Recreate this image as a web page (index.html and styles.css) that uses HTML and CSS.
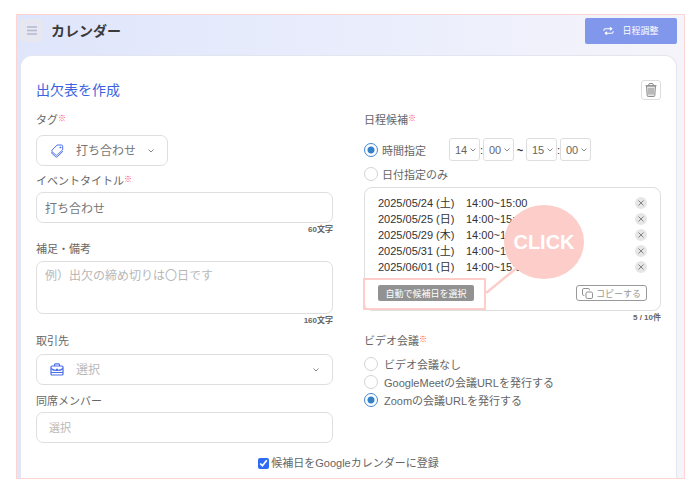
FILE: index.html
```html
<!DOCTYPE html>
<html lang="ja">
<head>
    <meta charset="UTF-8">
    <meta name="viewport" content="width=device-width, initial-scale=1.0">
    <title>カレンダー</title>
    <link rel="stylesheet" href="styles.css">
</head>
<body>
    <div class="app">
        <header class="topbar">
            <button type="button" class="menu-btn" aria-label="メニュー">
                <svg width="10" height="9" viewBox="0 0 10 9" stroke="#b4b9d0" stroke-width="1.4"><path d="M0 1h10M0 4.5h10M0 8h10"/></svg>
            </button>
            <h1>カレンダー</h1>
            <button type="button" class="schedule-btn">
                <svg width="11" height="8" viewBox="0 0 11 8" fill="none" stroke="#fff" stroke-width="1.1" stroke-linecap="round" stroke-linejoin="round"><path d="M.8 3.500q.2-1.700 1.700-1.700H8.500M7.300.6 8.800 1.800 7.300 3M10.200 4.500q-.2 1.700-1.700 1.700H2.500M3.700 5 2.200 6.200 3.700 7.400"/></svg>
                日程調整
            </button>
        </header>

        <form class="card">
            <div class="card-head">
                <h2>出欠表を作成</h2>
                <button type="button" class="trash-btn" aria-label="削除">
                    <svg width="12" height="14" viewBox="0 0 12 14" fill="none" stroke="#8c8c8c" stroke-width="1" stroke-linejoin="round"><path d="M1.500 3l.7 9.500q0 1 1 1h5.600q1 0 1-1L10.500 3z" fill="#e4e4e4"/><path d="M.5 2.700h11M3.500 2.500Q3.500.5 5 .5h2q1.500 0 1.500 2M4 5v6.500M6 5v6.500M8 5v6.500"/></svg>
                </button>
            </div>

            <div class="columns">
                <div class="col">
                    <label class="label" for="tag">タグ<sup>※</sup></label>
                    <div class="box select-box tag-box">
                        <svg width="14" height="14" viewBox="0 0 14 14" fill="none" stroke="#4a6fe8" stroke-width="1" stroke-linejoin="round" stroke-linecap="round"><path d="M7.500 1h4q1.200 0 1.200 1.200v3.600L7.200 11q-.7.600-1.400 0L2 7.700q-.700-.7-.1-1.400zM1.300 8.700l4.500 4.200q.7.500 1.400 0L12.700 7.500"/><circle cx="10.300" cy="3.400" r=".5"/></svg>
                        <select id="tag"><option>打ち合わせ</option></select>
                    </div>

                    <label class="label title-label" for="title">イベントタイトル<sup>※</sup></label>
                    <input class="box" id="title" type="text" value="打ち合わせ">
                    <p class="hint">60文字</p>

                    <label class="label note-label" for="note">補足・備考</label>
                    <textarea class="box" id="note" placeholder="例）出欠の締め切りは〇日です"></textarea>
                    <p class="hint">160文字</p>

                    <label class="label client-label" for="client">取引先</label>
                    <div class="box select-box client-box">
                        <svg width="14" height="13" viewBox="0 0 14 13" fill="none" stroke="#4a6fe8" stroke-width="1.200" stroke-linejoin="round"><path d="M4.500 3V1.700q0-.900.900-.900h3.200q.900 0 .900.900V3"/><rect x="1" y="3" width="12" height="9" rx="1"/><path d="M1 5.500Q3 7.500 7 7.500T13 5.500M1 9.500h12M6 6.300h2"/></svg>
                        <select id="client"><option>選択</option></select>
                    </div>

                    <label class="label member-label" for="member">同席メンバー</label>
                    <input class="box member" id="member" type="text" placeholder="選択">
                </div>

                <div class="col">
                    <p class="label">日程候補<sup>※</sup></p>
                    <div class="time-row">
                        <label class="radio"><input type="radio" name="mode" checked>時間指定</label>
                        <div class="times">
                            <select aria-label="開始時"><option>14</option></select>
                            <span>:</span>
                            <select aria-label="開始分"><option>00</option></select>
                            <span class="tilde">~</span>
                            <select aria-label="終了時"><option>15</option></select>
                            <span>:</span>
                            <select aria-label="終了分"><option>00</option></select>
                        </div>
                    </div>
                    <label class="radio date-only"><input type="radio" name="mode">日付指定のみ</label>

                    <div class="candidates">
                        <ul>
                            <li><span class="date">2025/05/24 (土)</span><span>14:00~15:00</span><button type="button" class="remove" aria-label="削除"><svg width="6" height="6" viewBox="0 0 6 6" stroke="#858585"><path d="M.5.5l5 5M5.500.5l-5 5"/></svg></button></li>
                            <li><span class="date">2025/05/25 (日)</span><span>14:00~15:00</span><button type="button" class="remove" aria-label="削除"><svg width="6" height="6" viewBox="0 0 6 6" stroke="#858585"><path d="M.5.5l5 5M5.500.5l-5 5"/></svg></button></li>
                            <li><span class="date">2025/05/29 (木)</span><span>14:00~15:00</span><button type="button" class="remove" aria-label="削除"><svg width="6" height="6" viewBox="0 0 6 6" stroke="#858585"><path d="M.5.5l5 5M5.500.5l-5 5"/></svg></button></li>
                            <li><span class="date">2025/05/31 (土)</span><span>14:00~15:00</span><button type="button" class="remove" aria-label="削除"><svg width="6" height="6" viewBox="0 0 6 6" stroke="#858585"><path d="M.5.5l5 5M5.500.5l-5 5"/></svg></button></li>
                            <li><span class="date">2025/06/01 (日)</span><span>14:00~15:00</span><button type="button" class="remove" aria-label="削除"><svg width="6" height="6" viewBox="0 0 6 6" stroke="#858585"><path d="M.5.5l5 5M5.500.5l-5 5"/></svg></button></li>
                        </ul>
                        <div class="actions">
                            <button type="button" class="auto-btn">自動で候補日を選択</button>
                            <button type="button" class="copy-btn">
                                <svg width="11" height="11" viewBox="0 0 11 11" fill="none" stroke="#8f8f8f"><rect x="4" y="4" width="6.500" height="6.500" rx="1.300"/><path d="M2.300 7.500H1.800Q.5 7.500.5 6.200V1.800Q.5.5 1.800.5h4.400q1.300 0 1.300 1.300v.5"/></svg>
                                コピーする
                            </button>
                        </div>
                        <!-- click guide laid over the list -->
                        <div class="guide-frame"></div>
                        <svg class="guide-line" width="40" height="34" viewBox="0 0 40 34" stroke="#fccdc9" stroke-width="2.5"><path d="M0 31 38 0"/></svg>
                        <div class="guide-click">CLICK</div>
                    </div>
                    <p class="hint">5 / 10件</p>

                    <p class="label video-label">ビデオ会議<sup>※</sup></p>
                    <div class="videos">
                        <label class="radio"><input type="radio" name="video">ビデオ会議なし</label>
                        <label class="radio"><input type="radio" name="video">GoogleMeetの会議URLを発行する</label>
                        <label class="radio"><input type="radio" name="video" checked>Zoomの会議URLを発行する</label>
                    </div>
                </div>
            </div>

            <label class="register"><input type="checkbox" checked>候補日をGoogleカレンダーに登録</label>
        </form>
    </div>
</body>
</html>
```
FILE: styles.css
```css
* {
    box-sizing: border-box;
}
body {
    margin: 0;
    padding: 14px 15px 21px 16px;
    height: 100vh;
    display: flex;
    background: #fff;
    color: #666;
    font-family: "Liberation Sans", "Noto Sans CJK JP", sans-serif;
    font-size: 11px;
}
h1, h2, p, ul {
    margin: 0;
    padding: 0;
}
button, input, select, textarea {
    font-family: inherit;
    margin: 0;
}
button {
    display: flex;
    align-items: center;
    justify-content: center;
    padding: 0;
    border: none;
    cursor: pointer;
}
svg {
    flex: none;
}
.app {
    flex: 1;
    display: flex;
    flex-direction: column;
    overflow: hidden;
    border: 1px solid #fcd5d3;
    background: linear-gradient(90deg, #dfe5fb, #e9edfc 50%, #f5f4fa);
}

/* header */
.topbar {
    display: flex;
    align-items: center;
    height: 40px;
    padding: 0 7px 9px 3px;
}
.menu-btn {
    width: 23px;
    height: 23px;
    border-radius: 4px;
    background: #e6e7f0;
}
.topbar h1 {
    flex: 1;
    margin-left: 8px;
    font-size: 14px;
    line-height: 16px;
    color: #3a3a3a;
}
.schedule-btn {
    gap: 8px;
    width: 92px;
    height: 26px;
    border-radius: 2px;
    background: #8197ec;
    color: #fff;
    font-size: 9px;
}

/* card */
.card {
    flex: 1;
    margin: 0 7px 0 3px;
    padding: 24px 15px 0;
    border: 1px solid #e3e5ef;
    border-bottom: none;
    border-radius: 12px 12px 0 0;
    background: #fff;
}
.card-head {
    display: flex;
    align-items: center;
    justify-content: space-between;
    margin-bottom: 12px;
}
.card-head h2 {
    font-size: 14px;
    line-height: 18px;
    font-weight: normal;
    color: #3c62e0;
}
.trash-btn {
    width: 20px;
    height: 20px;
    border: 1px solid #ddd;
    border-radius: 3px;
    background: #fff;
}
.columns {
    display: grid;
    grid-template-columns: 1fr 1fr;
    gap: 31px;
}
.col {
    display: flex;
    flex-direction: column;
    min-width: 0;
}
.label {
    height: 16px;
    line-height: 16px;
}
.label sup {
    color: #ff4646;
    font-size: 8px;
    font-weight: bold;
    line-height: 8px;
    vertical-align: 3px;
}
.hint {
    height: 13px;
    line-height: 13px;
    font-size: 8px;
    font-weight: bold;
    text-align: right;
    color: #666;
}

/* form fields */
.box {
    width: 100%;
    height: 31px;
    padding: 0 8px;
    border: 1px solid #dedede;
    border-radius: 7px;
    background: #fff;
    color: #777;
    font-size: 12px;
}
textarea.box {
    display: block;
    height: 53px;
    margin-top: 4px;
    padding: 6px 8px;
    line-height: 16px;
    resize: none;
}
.box::placeholder {
    color: #b8b8b8;
}
.select-box {
    display: flex;
    align-items: center;
    gap: 12px;
    padding: 0 13px;
}
select {
    appearance: none;
    border: none;
    background: url("data:image/svg+xml,%3Csvg xmlns='http://www.w3.org/2000/svg' width='6' height='4' fill='none' stroke='%23888'%3E%3Cpath d='M.5.5 3 3 5.500.5'/%3E%3C/svg%3E") no-repeat right center;
    color: inherit;
    font-size: 12px;
    outline: none;
}
.select-box select {
    flex: 1;
    padding: 0;
}
.tag-box {
    width: 132px;
    margin-top: 7px;
}
.title-label {
    margin: 7px 0 3px;
}
.note-label {
    margin-top: 5px;
}
.client-label {
    margin: 6px 0 5px;
}
.client-box {
    color: #b8b8b8;
}
.member-label {
    margin: 8px 0 3px;
}
.member {
    padding: 0 12px;
    font-size: 11px;
}

/* radios */
.radio {
    display: flex;
    align-items: center;
    gap: 4px;
}
.radio input {
    appearance: none;
    width: 14px;
    height: 14px;
    border: 1px solid #d3d3d3;
    border-radius: 50%;
}
.radio input:checked {
    border-color: #3f87d2;
    background: radial-gradient(circle, #3380cb 3px, #fff 4px);
}
.time-row {
    display: flex;
    align-items: center;
    gap: 23px;
    margin-top: 10px;
}
.times {
    display: flex;
    align-items: center;
}
.times select {
    width: 31px;
    height: 23px;
    padding: 0 0 0 5px;
    border: 1px solid #dedede;
    border-radius: 3px;
    background-position: right 3px center;
    font-size: 11px;
}
.times span {
    width: 3px;
    text-align: center;
    color: #333;
}
.times .tilde {
    width: 12px;
    font-weight: bold;
}
.date-only {
    height: 16px;
    margin: 5px 0;
}

/* candidate list */
.candidates {
    position: relative;
    padding: 7px 13px 9px;
    border: 1px solid #dedede;
    border-radius: 8px;
}
.candidates ul {
    list-style: none;
}
.candidates li {
    display: flex;
    align-items: center;
    height: 16px;
    line-height: 16px;
    color: #333;
}
.date {
    width: 88px;
}
.remove {
    width: 12px;
    height: 12px;
    margin-left: auto;
    border-radius: 50%;
    background: #e6e6e6;
}
.actions {
    display: flex;
    justify-content: space-between;
    margin-top: 10px;
}
.auto-btn, .copy-btn {
    height: 16px;
    border-radius: 3px;
    font-size: 9px;
}
.auto-btn {
    width: 96px;
    border-radius: 2px;
    background: #929292;
    color: #fff;
}
.copy-btn {
    gap: 3px;
    width: 71px;
    border: 1px solid #999;
    background: #fff;
    color: #999;
}
.guide-frame {
    position: absolute;
    left: -2px;
    bottom: 0;
    width: 123px;
    height: 32px;
    border: 2px solid #fccdc9;
}
.guide-line {
    position: absolute;
    left: 121px;
    top: 74px;
}
.guide-click {
    position: absolute;
    left: 139px;
    top: 17px;
    width: 80px;
    height: 74px;
    border-radius: 50%;
    background: #fccdc9;
    color: #fff;
    font-size: 20px;
    font-weight: bold;
    line-height: 75px;
    text-align: center;
}
.video-label {
    margin: 9px 0 6px;
}
.videos .radio {
    gap: 6px;
    height: 18px;
}
.register {
    display: flex;
    align-items: center;
    justify-content: center;
    gap: 2px;
    margin-top: 12px;
    line-height: 16px;
}
.register input {
    width: 11px;
    height: 11px;
    accent-color: #2f6bf2;
}
```
